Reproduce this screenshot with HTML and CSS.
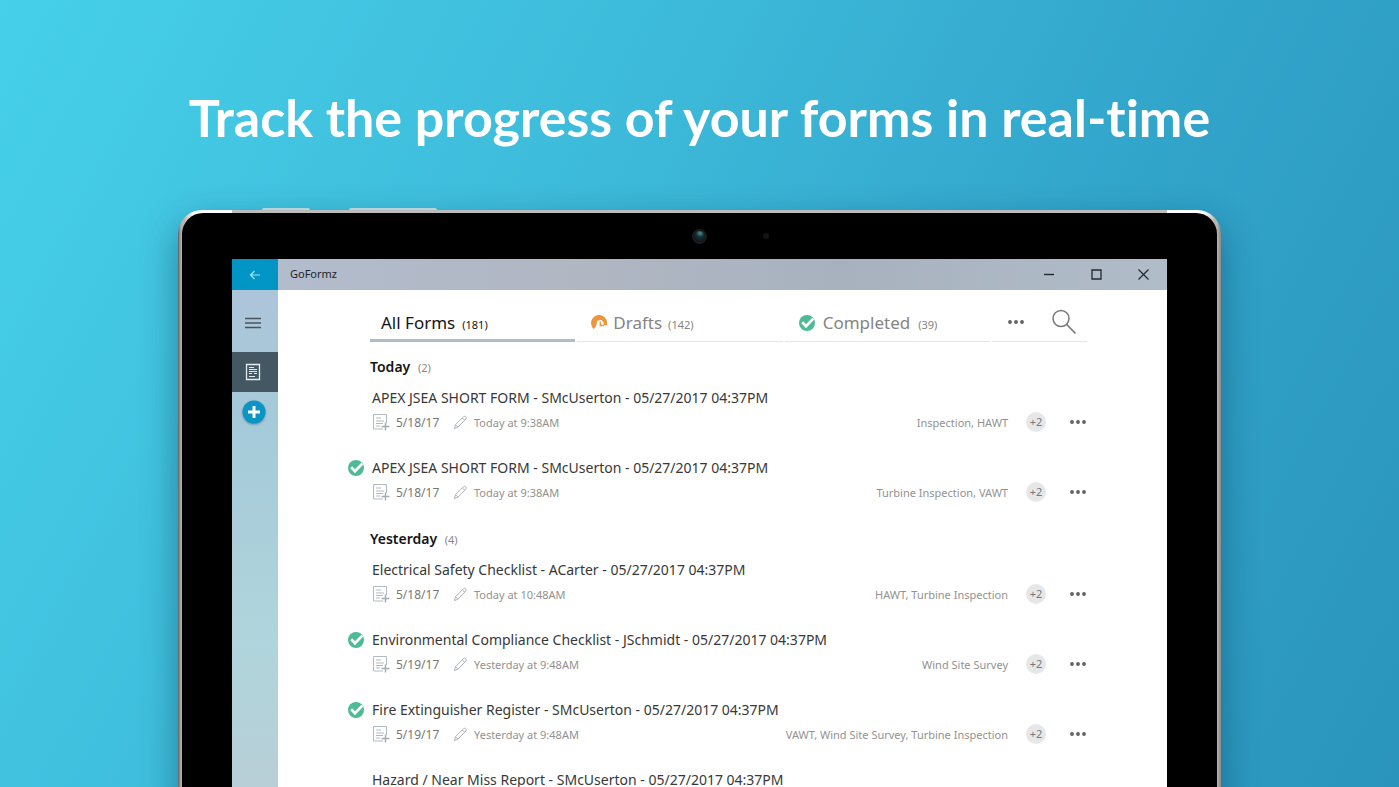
FILE: index.html
```html
<!DOCTYPE html>
<html lang="en">
<head>
<meta charset="utf-8">
<meta name="viewport" content="width=device-width, initial-scale=1">
<title>GoFormz</title>
<link rel="stylesheet" href="styles.css">
</head>
<body>
<svg class="sprite" aria-hidden="true">
  <symbol id="check" viewBox="0 0 16 16"><circle cx="8" cy="8" r="8" fill="#4dbb94"/><path d="M3.200 7.300 7 11.200 14.300 3.600" fill="none" stroke="#fff" stroke-width="2.700"/></symbol>
  <symbol id="doc" viewBox="0 0 18 18"><path d="M14.500 10V1.500H1.500v14.500h9.500M4 5h5M4 8h8M4 10.500h7M4 13h4" fill="none" stroke="#b3bbc2"/><path d="M13.500 9.500v8M9.500 13.500h8" fill="none" stroke="#a3adb5" stroke-width="1.500"/></symbol>
  <symbol id="pencil" viewBox="0 0 16 16"><path d="M1.500 14.500l1.200-4.200L11.300 1.700q1-.9 2.200.2t.3 2.300L5.300 13zM2.700 10.300 5.300 13M10 3.200l2.700 2.500" fill="none" stroke="#a9afb4"/></symbol>
  <symbol id="dots" viewBox="0 0 16 4"><circle cx="2" cy="2" r="1.900"/><circle cx="8" cy="2" r="1.900"/><circle cx="14" cy="2" r="1.900"/></symbol>
</svg>
<main class="promo">
  <h1 class="headline">Track the progress of your forms in real-time</h1>
  <div class="tablet">
    <span class="hw-button hw-power"></span><span class="hw-button hw-volume"></span>
    <div class="bezel">
      <span class="camera"></span><span class="sensor"></span>
      <div class="screen">
        <header class="titlebar">
          <button class="back" aria-label="Back"><svg width="12" height="10" viewBox="0 0 12 10"><path d="M11 5H1.500M5.500 1l-4 4 4 4" fill="none" stroke="#a5e3f5" stroke-width="1.200"/></svg></button>
          <span class="app-name">GoFormz</span>
          <button class="win" aria-label="Minimize"><svg width="11" height="11"><path d="M0 5.500h10" stroke="#222831" stroke-width="1.400"/></svg></button>
          <button class="win" aria-label="Maximize"><svg width="11" height="11"><path d="M1 1h9v9H1z" fill="none" stroke="#222831" stroke-width="1.300"/></svg></button>
          <button class="win" aria-label="Close"><svg width="11" height="11"><path d="M.5.500l10 10m0-10-10 10" stroke="#222831" stroke-width="1.200"/></svg></button>
        </header>
        <div class="app">
          <nav class="rail">
            <button class="rail-item menu" aria-label="Menu"><svg width="16" height="12"><path d="M0 1.500h16M0 6h16M0 10.500h16" stroke="#48545d" stroke-width="1.300"/></svg></button>
            <button class="rail-item active" aria-label="Forms"><svg width="16" height="18" viewBox="0 0 16 18"><path d="M1.500 1.500h13v15h-13z" fill="none" stroke="#e4eaed" stroke-width="1.300"/><path d="M4 4.500h5M4 6.500h8M4 8.500h8M4 10.500h3M9 10.500h3M4 13.500h6" stroke="#e4eaed" stroke-width="1.200"/></svg></button>
            <button class="rail-item add" aria-label="New form"><svg width="24" height="24"><circle cx="12" cy="12" r="11.500" fill="#0a95c4"/><path d="M12 6v12M6 12h12" stroke="#fff" stroke-width="3"/></svg></button>
          </nav>
          <section class="content">
            <div class="tabs">
              <button class="tab selected">All Forms <small>(181)</small></button>
              <button class="tab"><svg width="16" height="16" viewBox="0 0 16 16"><path d="M2.600 13.900A8 8 0 1 1 15.800 10.200L12.600 10.300V7.200L10.300 5 6.800 5.600C5 7 6.200 9 5 11.200 4.300 12.400 3.500 13.200 2.600 13.900z" fill="#ee963d"/><path d="M9.300 6.500v4h3.500" fill="none" stroke="#ee963d" stroke-width="1.300"/></svg>Drafts <small>(142)</small></button>
              <button class="tab done"><svg width="16" height="16"><use href="#check"/></svg>Completed <small>(39)</small></button>
              <div class="tools">
                <button aria-label="More"><svg class="dots" width="16" height="4"><use href="#dots"/></svg></button>
                <button aria-label="Search"><svg width="26" height="26" viewBox="0 0 26 26"><circle cx="10" cy="9.500" r="8" fill="none" stroke="#777" stroke-width="1.500"/><path d="M15.700 15.500 24.500 24.500" stroke="#777" stroke-width="1.700"/></svg></button>
              </div>
            </div>
            <h2 class="group">Today <small>(2)</small></h2>
            <article class="row">
              <span class="status"></span>
              <h3>APEX JSEA SHORT FORM - SMcUserton - 05/27/2017 04:37PM</h3>
              <div class="meta"><svg width="18" height="18"><use href="#doc"/></svg><span class="date">5/18/17</span><svg width="15" height="15"><use href="#pencil"/></svg><span class="edited">Today at 9:38AM</span><span class="tags">Inspection, HAWT</span><span class="count">+2</span><button aria-label="Form actions"><svg class="dots" width="16" height="4"><use href="#dots"/></svg></button></div>
            </article>
            <article class="row">
              <span class="status"><svg width="16" height="16"><use href="#check"/></svg></span>
              <h3>APEX JSEA SHORT FORM - SMcUserton - 05/27/2017 04:37PM</h3>
              <div class="meta"><svg width="18" height="18"><use href="#doc"/></svg><span class="date">5/18/17</span><svg width="15" height="15"><use href="#pencil"/></svg><span class="edited">Today at 9:38AM</span><span class="tags">Turbine Inspection, VAWT</span><span class="count">+2</span><button aria-label="Form actions"><svg class="dots" width="16" height="4"><use href="#dots"/></svg></button></div>
            </article>
            <h2 class="group">Yesterday <small>(4)</small></h2>
            <article class="row">
              <span class="status"></span>
              <h3>Electrical Safety Checklist - ACarter - 05/27/2017 04:37PM</h3>
              <div class="meta"><svg width="18" height="18"><use href="#doc"/></svg><span class="date">5/18/17</span><svg width="15" height="15"><use href="#pencil"/></svg><span class="edited">Today at 10:48AM</span><span class="tags">HAWT, Turbine Inspection</span><span class="count">+2</span><button aria-label="Form actions"><svg class="dots" width="16" height="4"><use href="#dots"/></svg></button></div>
            </article>
            <article class="row">
              <span class="status"><svg width="16" height="16"><use href="#check"/></svg></span>
              <h3>Environmental Compliance Checklist - JSchmidt - 05/27/2017 04:37PM</h3>
              <div class="meta"><svg width="18" height="18"><use href="#doc"/></svg><span class="date">5/19/17</span><svg width="15" height="15"><use href="#pencil"/></svg><span class="edited">Yesterday at 9:48AM</span><span class="tags">Wind Site Survey</span><span class="count">+2</span><button aria-label="Form actions"><svg class="dots" width="16" height="4"><use href="#dots"/></svg></button></div>
            </article>
            <article class="row">
              <span class="status"><svg width="16" height="16"><use href="#check"/></svg></span>
              <h3>Fire Extinguisher Register - SMcUserton - 05/27/2017 04:37PM</h3>
              <div class="meta"><svg width="18" height="18"><use href="#doc"/></svg><span class="date">5/19/17</span><svg width="15" height="15"><use href="#pencil"/></svg><span class="edited">Yesterday at 9:48AM</span><span class="tags">VAWT, Wind Site Survey, Turbine Inspection</span><span class="count">+2</span><button aria-label="Form actions"><svg class="dots" width="16" height="4"><use href="#dots"/></svg></button></div>
            </article>
            <article class="row">
              <span class="status"></span>
              <h3>Hazard / Near Miss Report - SMcUserton - 05/27/2017 04:37PM</h3>
            </article>
          </section>
        </div>
      </div>
    </div>
  </div>
</main>
</body>
</html>
```
FILE: styles.css
```css
* { box-sizing: border-box; }
body { margin: 0; font-family: "Noto Sans", "Open Sans", sans-serif; color: #333; }
button { border: 0; padding: 0; margin: 0; background: none; font: inherit; color: inherit; display: flex; align-items: center; justify-content: center; cursor: pointer; }
svg { display: block; flex: none; }
small { font-size: 11px; font-weight: 400; }
.sprite { position: absolute; width: 0; height: 0; }
.promo { height: 100vh; overflow: hidden; display: flex; flex-direction: column; align-items: center; background: linear-gradient(118deg, #46d0e9 0%, #3ebcdb 35%, #32a5cb 67%, #2a94bc 100%); }
.headline { margin: 0; padding: 82px 16px 58px; color: #fff; font: 700 52px/70px Lato, sans-serif; font-variant-ligatures: none; text-align: center; }
.tablet { position: relative; flex: 1 0 auto; width: 75%; max-width: 1043px; border-radius: 24px 24px 0 0; padding: 3px 4px 0; background: linear-gradient(90deg, transparent 6px, #fff 16px, #fff 54px, #bcbcbc 54px, #bcbcbc calc(100% - 54px), #fff calc(100% - 54px), #fff calc(100% - 16px), transparent calc(100% - 6px)) top / 100% 12px no-repeat, linear-gradient(90deg, #555f61 0, #9c9996 2px, #bab4b0 4px, #bab4b0 calc(100% - 4px), #888 100%); box-shadow: 0 14px 36px rgba(0, 50, 75, .45); }
.hw-button { position: absolute; top: -2px; height: 2px; background: #b5d4da; border-radius: 2px 2px 0 0; }
.hw-power { left: 84px; width: 48px; }
.hw-volume { left: 171px; width: 88px; }
.bezel { position: relative; height: 100%; background: #000; border-radius: 21px 21px 0 0; padding: 46px 50px 0; }
.camera { position: absolute; top: 16px; left: 50%; width: 15px; height: 15px; margin-left: -8px; border: 2px solid #1b1b1e; border-radius: 50%; background: radial-gradient(circle at 55% 20%, #3e7d7b 0 8%, #153238 35%, #11171b 75%); }
.sensor { position: absolute; top: 20px; left: 50%; width: 6px; height: 6px; margin-left: 63px; border-radius: 50%; background: #141416; }
.screen { background: #fff; }
.titlebar { display: flex; height: 31px; background: linear-gradient(90deg, #b1bdce, #b1b7c3 35%, #a8b2bf 65%, #b0bcc8); font-size: 11px; color: #20262e; }
.back { width: 46px; background: #0095c4; }
.app-name { flex: 1; padding-left: 12px; line-height: 30px; }
.win { width: 47px; }
.app { display: flex; }
.rail { width: 46px; padding-top: 13px; background: linear-gradient(#adc5da, #a5cad9 25%, #b0d5dc 65%, #b8ced6 92%); }
.rail-item { width: 46px; height: 40px; }
.menu { height: 39px; margin-bottom: 10px; padding-right: 4px; }
.active { background: #435862; padding-right: 4px; }
.add { filter: drop-shadow(0 1px 1px rgba(0, 60, 90, .4)); padding-right: 2px; }
.content { flex: 1; min-width: 0; padding: 0 80px 0 70px; }
.tabs { display: grid; grid-template-columns: repeat(3, 1fr) 95px; column-gap: 2px; height: 52px; margin: 0 0 13px 22px; }
.tab { justify-content: flex-start; gap: 6px; padding: 14px 0 0 14px; border-bottom: 1px solid #e5e5e5; font-size: 17px; color: #848484; white-space: nowrap; }
.tab small { padding-top: 3px; }
.selected { color: #151515; padding-left: 11px; padding-top: 16px; border-bottom: 3px solid #b1bcc8; gap: 7px; }
.done { gap: 8px; }
.tools { display: flex; justify-content: space-between; padding: 13px 10px 0 16px; border-bottom: 1px solid #e5e5e5; }
.dots { fill: #606060; }
.group { margin: 0 0 0 22px; height: 31px; font-size: 14px; line-height: 24px; font-weight: 600; color: #151515; }
.row + .group { margin-top: 1px; }
.group small { margin-left: 4px; color: #888; }
.row { display: grid; grid-template-columns: 24px 1fr; grid-template-rows: 24px 24px; height: 70px; }
.status { display: flex; align-items: center; }
.row h3 { margin: 0; font-size: 14px; line-height: 24px; font-weight: 400; color: #383838; white-space: nowrap; }
.meta { grid-column: 2; display: flex; align-items: center; font-size: 11px; color: #929292; white-space: nowrap; }
.date { width: 57px; margin-left: 6px; color: #777; font-size: 12px; }
.edited { margin-left: 6px; }
.tags { margin-left: auto; }
.count { width: 20px; height: 20px; margin: 0 23px 0 18px; border-radius: 50%; background: #e5e7e9; color: #777; line-height: 20px; text-align: center; }
.meta button { height: 20px; width: 18px; }
```
